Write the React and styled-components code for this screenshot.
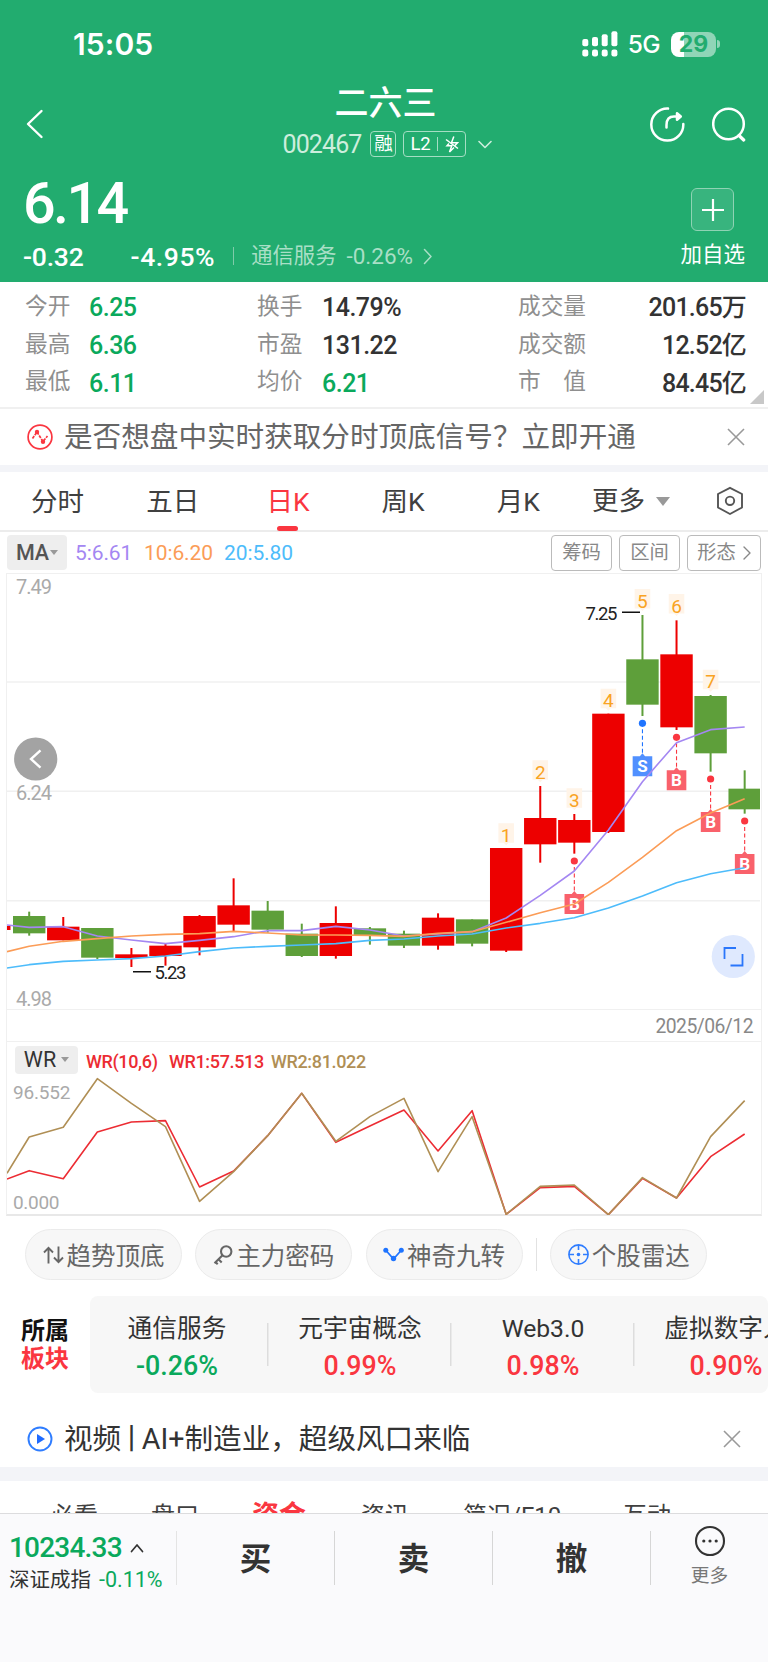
import styled, { createGlobalStyle } from "styled-components";

const GlobalStyle = createGlobalStyle`
  * {
    box-sizing: border-box;
  }

  body {
    margin: 0;
    background: #fff;
    font-family: Roboto, "Noto Sans CJK SC", sans-serif;
    color: #333;
  }

  svg {
    display: block;
    flex-shrink: 0;
  }
`;

const RED = "#fa3640";
const GREEN = "#0aa95c";
const CANDLE_RED = "#ed0000";
const CANDLE_GREEN = "#5e9f3a";

const stats = [
  ["今开", "6.25", GREEN, "换手", "14.79%", "#333", "成交量", "201.65万"],
  ["最高", "6.36", GREEN, "市盈", "131.22", "#333", "成交额", "12.52亿"],
  ["最低", "6.11", GREEN, "均价", "6.21", GREEN, "市　值", "84.45亿"],
];

const sectors = [
  { name: "通信服务", pct: "-0.26%", color: GREEN },
  { name: "元宇宙概念", pct: "0.99%", color: RED },
  { name: "Web3.0", pct: "0.98%", color: RED },
  { name: "虚拟数字人", pct: "0.90%", color: RED },
];

// color, body top, body bottom, high, low (chart units, 3 per px)
const candles = [
  ["g", 1068, 1120, 1055, 1127],
  ["r", 1100, 1141, 1071, 1141],
  ["g", 1104, 1193, 1104, 1197],
  ["r", 1183, 1194, 1164, 1221],
  ["r", 1157, 1188, 1150, 1217],
  ["r", 1068, 1162, 1065, 1186],
  ["r", 1036, 1094, 955, 1114],
  ["g", 1052, 1109, 1023, 1118],
  ["g", 1121, 1188, 1091, 1191],
  ["r", 1089, 1188, 1039, 1196],
  ["g", 1105, 1126, 1101, 1154],
  ["g", 1121, 1157, 1112, 1164],
  ["r", 1073, 1157, 1060, 1169],
  ["g", 1078, 1151, 1078, 1159],
  ["r", 864, 1172, 864, 1176],
  ["r", 774, 853, 678, 908],
  ["r", 780, 848, 762, 881],
  ["r", 461, 816, 461, 819],
  ["g", 298, 434, 165, 468],
  ["r", 283, 502, 181, 510],
  ["g", 408, 580, 405, 635],
  ["g", 686, 748, 631, 761],
];

// the first value of each line is where it enters the frame
const ma5 = [1095, 1102, 1100, 1128, 1140, 1151, 1141, 1130, 1112, 1112, 1099, 1110, 1128, 1122, 1115, 1074, 1006, 933, 810, 665, 548, 509, 501];
const ma10 = [1175, 1159, 1144, 1136, 1128, 1123, 1121, 1114, 1119, 1125, 1125, 1126, 1129, 1120, 1115, 1087, 1058, 1032, 967, 892, 812, 759, 716];
const ma20 = [1224, 1214, 1204, 1200, 1196, 1188, 1175, 1164, 1159, 1155, 1151, 1141, 1137, 1128, 1122, 1104, 1090, 1073, 1044, 1008, 968, 941, 923];
const wr1 = [537, 512, 536, 396, 366, 362, 561, 513, 407, 280, 427, 378, 330, 453, 332, 643, 563, 559, 644, 535, 594, 470, 402];
const wr2 = [520, 411, 382, 236, 310, 380, 604, 515, 407, 280, 424, 350, 295, 515, 350, 643, 559, 555, 644, 533, 594, 410, 302];

const counts = [
  { i: 14, y: 790, n: 1 },
  { i: 15, y: 601, n: 2 },
  { i: 16, y: 685, n: 3 },
  { i: 17, y: 386, n: 4 },
  { i: 18, y: 87, n: 5 },
  { i: 19, y: 102, n: 6 },
  { i: 20, y: 329, n: 7 },
];

const signals = [
  { i: 16, y: 903, type: "B" },
  { i: 18, y: 490, type: "S" },
  { i: 19, y: 532, type: "B" },
  { i: 20, y: 657, type: "B" },
  { i: 21, y: 783, type: "B" },
];

const Page = styled.div`
  width: 768px;
  height: 1662px;
  overflow: hidden;
  background: #fff;
`;

const Header = styled.header`
  height: 282px;
  background: #22ac6f;
  color: #fff;
`;

const StatusBar = styled.div`
  display: flex;
  align-items: center;
  height: 85px;
  padding: 3px 48px 0 73px;
  font-family: Inter, sans-serif;
`;

const Clock = styled.span`
  flex: 1;
  font-size: 30px;
  font-weight: 600;
  letter-spacing: 0.1px;
`;

const Network = styled.span`
  margin: 0 11px 0 9px;
  font-size: 24.5px;
  font-weight: 500;
  letter-spacing: -0.6px;
`;

const Battery = styled.div`
  width: 45px;
  height: 25px;
  border-radius: 8px;
  background: linear-gradient(to right, #fff 13px, #90d5b7 13px);
  color: #22ac6f;
  font-size: 23px;
  font-weight: 700;
  line-height: 25px;
  text-align: center;
`;

const BatteryTip = styled.div`
  width: 3px;
  height: 8px;
  margin-left: 1px;
  border-radius: 0 4px 4px 0;
  background: #90d5b7;
`;

const NavBar = styled.div`
  display: grid;
  grid-template-columns: 120px 1fr 120px;
  height: 78px;
  padding: 0 22px 0 25px;
  align-items: center;
`;

const NavTitle = styled.div`
  display: flex;
  flex-direction: column;
  align-items: center;
  height: 78px;
`;

const StockName = styled.h1`
  margin: 0;
  font-size: 34px;
  font-weight: 500;
  line-height: 36px;
`;

const CodeRow = styled.div`
  display: flex;
  align-items: center;
  height: 30px;
  margin: 8px 0 0 4px;
  color: #cdeedd;
`;

const Code = styled.span`
  margin-right: 9px;
  padding-top: 1px;
  font-size: 25px;
  letter-spacing: -0.9px;
`;

const Badge = styled.span`
  display: flex;
  align-items: center;
  justify-content: center;
  gap: 7px;
  width: ${(p) => p.$width}px;
  height: 26px;
  margin-right: ${(p) => p.$gap}px;
  border: 1.5px solid #a5dec4;
  border-radius: 4px;
  font-size: 18.5px;
  line-height: 22px;
  letter-spacing: -0.3px;
  color: #fff;
`;

const BadgeLine = styled.i`
  width: 1px;
  height: 14px;
  background: #a5dec4;
`;

const NavActions = styled.div`
  display: flex;
  justify-content: flex-end;
  gap: 27px;
`;

const PriceArea = styled.div`
  display: flex;
  justify-content: space-between;
  padding: 9px 23px 0;
`;

const Price = styled.div`
  font-size: 57.5px;
  font-weight: 500;
  line-height: 63px;
  letter-spacing: -2.6px;
`;

const ChangeRow = styled.div`
  display: flex;
  align-items: center;
  height: 30px;
  margin-top: 6px;
  font-size: 26.5px;
  font-weight: 500;
  letter-spacing: -0.2px;
`;

const ChangePct = styled.span`
  margin: 0 18px 0 47px;
  letter-spacing: 0.6px;
`;

const Industry = styled.span`
  display: flex;
  align-items: center;
  gap: 10px;
  padding-left: 18px;
  background: linear-gradient(#7fcba9, #7fcba9) left / 1px 18px no-repeat;
  color: #a9dfc6;
  font-size: 21.3px;
  font-weight: 400;
  line-height: 28px;
  letter-spacing: 0;
`;

const IndustryPct = styled.span`
  font-size: 22.5px;
`;

const AddBox = styled.div`
  display: flex;
  flex-direction: column;
  align-items: center;
  padding-top: 16px;
  font-size: 21.5px;
  line-height: 26px;
`;

const AddButton = styled.div`
  display: grid;
  place-items: center;
  width: 43px;
  height: 43px;
  margin-bottom: 11px;
  border: 1.5px solid #8fd3b4;
  border-radius: 6px;
  background: #38b47e;
`;

const Stats = styled.section`
  position: relative;
  height: 127px;
  padding: 6px 22px 0 25px;
  border-bottom: 2px solid #f0f0f0;
`;

const StatRow = styled.div`
  display: grid;
  grid-template-columns: 64px 168px 65px 196px 100px 1fr;
  height: 37.8px;
  align-items: center;
  line-height: 34px;
`;

const StatLabel = styled.span`
  color: #8f8f8f;
  font-size: 22.7px;
  white-space: nowrap;
`;

const StatValue = styled.span`
  padding-top: 3px;
  color: ${(p) => p.$color || "#333"};
  font-size: 25px;
  font-weight: 500;
  letter-spacing: ${(p) => (p.$right ? -0.8 : -0.5)}px;
  text-align: ${(p) => (p.$right ? "right" : "left")};
  white-space: nowrap;
`;

const Corner = styled.i`
  position: absolute;
  right: 4px;
  bottom: 3px;
  border-left: 14px solid transparent;
  border-bottom: 14px solid #c8c8c8;
`;

const Notice = styled.div`
  display: flex;
  align-items: center;
  gap: 11px;
  height: ${(p) => p.$height}px;
  padding: ${(p) => p.$top || 0}px ${(p) => p.$right}px 0 27px;
  font-size: 28.6px;
  color: ${(p) => p.$color};
  white-space: nowrap;
`;

const NoticeText = styled.span`
  flex: 1;
  line-height: 36px;
`;

const Bar = styled.span`
  margin: 0 -4px;
`;

const Divider = styled.div`
  height: ${(p) => p.$height}px;
  background: #f3f4f8;
`;

const Periods = styled.nav`
  display: flex;
  align-items: center;
  height: 60px;
  border-bottom: 2px solid #ececec;
`;

const Period = styled.div`
  position: relative;
  width: 115.2px;
  height: 58px;
  color: ${(p) => (p.$active ? RED : "#404040")};
  font-size: 26.5px;
  line-height: 60px;
  text-align: center;

  &::after {
    content: "";
    display: ${(p) => (p.$active ? "block" : "none")};
    position: absolute;
    left: 47px;
    bottom: -1px;
    width: 21px;
    height: 5px;
    border-radius: 3px;
    background: ${RED};
  }
`;

const MorePeriod = styled.div`
  display: flex;
  align-items: center;
  gap: 11px;
  width: 124px;
  margin-left: 16px;
  font-size: 26.5px;
  line-height: 58px;
  color: #404040;
`;

const Caret = styled.i`
  border: ${(p) => p.$size}px solid transparent;
  border-top: ${(p) => p.$size * 1.3}px solid #999;
  border-bottom: 0;
`;

const MaRow = styled.div`
  display: flex;
  align-items: center;
  height: 41px;
  padding: 0 7px;
`;

const IndicatorButton = styled.div`
  display: flex;
  align-items: center;
  justify-content: center;
  gap: ${(p) => p.$gap}px;
  width: ${(p) => p.$width}px;
  height: ${(p) => p.$height}px;
  margin-right: 8px;
  border-radius: 4px;
  background: #eee;
  color: ${(p) => p.$color};
  font-size: 21.5px;
  font-weight: ${(p) => p.$weight};
`;

const MaValue = styled.span`
  width: ${(p) => p.$width}px;
  color: ${(p) => p.$color};
  font-size: 21px;
  letter-spacing: -0.1px;
  white-space: nowrap;
`;

const Tools = styled.div`
  display: flex;
  gap: 7px;
  margin-left: auto;
`;

const Tool = styled.div`
  display: flex;
  align-items: center;
  justify-content: center;
  gap: 7px;
  width: ${(p) => p.$width}px;
  height: 36px;
  border: 1.5px solid #bbb;
  border-radius: 4px;
  color: #888;
  font-size: 19.3px;
  line-height: 30px;
`;

const ChartFrame = styled.section`
  height: 643px;
  margin: 0 6px;
  border: 1.5px solid #f0f0f0;
  border-bottom-width: 2px;
  border-bottom-color: #e8e8e8;
`;

const DateRow = styled.div`
  height: 33px;
  padding-right: 8px;
  border: 1.5px solid #f0f0f0;
  border-width: 1.5px 0;
  color: #888;
  font-size: 19.3px;
  line-height: 34px;
  letter-spacing: -0.5px;
  text-align: right;
`;

const WrHeader = styled.div`
  display: flex;
  align-items: center;
  height: 35px;
  padding-left: 8px;
`;

const WrValue = styled.span`
  width: ${(p) => p.$width}px;
  padding-top: 3px;
  color: ${(p) => p.$color};
  font-size: 18px;
  font-weight: 500;
  letter-spacing: -0.35px;
  white-space: nowrap;
`;

const Pills = styled.div`
  display: flex;
  align-items: center;
  gap: 13.3px;
  height: 80px;
  padding: 0 0 3px 25px;
`;

const Pill = styled.div`
  display: flex;
  align-items: center;
  justify-content: center;
  gap: 3px;
  width: 157px;
  height: 51px;
  border: 1.5px solid #ebebeb;
  border-radius: 26px;
  background: #f7f7f7;
  color: #666;
  font-size: 24.5px;
  white-space: nowrap;
`;

const PillLine = styled.i`
  width: 1px;
  height: 33px;
  background: #e2e2e2;
`;

const SectorRow = styled.div`
  display: flex;
  height: 97px;
`;

const SectorTitle = styled.div`
  width: 90px;
  padding: 21px 0 0 21px;
  color: #111;
  font-size: 24px;
  font-weight: 700;
  line-height: 28px;

  span {
    display: block;
    color: ${RED};
  }
`;

const SectorPanel = styled.div`
  display: flex;
  flex: 1;
  overflow: hidden;
  border-radius: 8px;
  background: #f7f7f7;
`;

const Sector = styled.div`
  flex: none;
  width: 183px;
  margin-left: ${(p) => (p.$first ? "-4.5px" : 0)};
  padding-top: 15px;
  background: linear-gradient(#ddd, #ddd) right / 1.5px 43px no-repeat;
  font-size: 24.7px;
  line-height: 36px;
  text-align: center;
`;

const SectorPct = styled.div`
  color: ${(p) => p.$color};
  font-size: 26.8px;
  font-weight: 500;
  line-height: 38px;
`;

const DetailTabs = styled.nav`
  display: flex;
  height: 32px;
  padding: 20px 0 0 50px;
  overflow: hidden;
  font-size: 25px;
  line-height: 30px;
  white-space: nowrap;
`;

const DetailTab = styled.span`
  flex: none;
  width: ${(p) => p.$width}px;
  color: ${(p) => (p.$active ? RED : "#404040")};
  font-size: ${(p) => (p.$active ? 27 : 24)}px;
  font-weight: ${(p) => (p.$active ? 700 : 400)};
`;

const TradeBar = styled.footer`
  display: flex;
  height: 149px;
  padding-top: 17px;
  border-top: 1.5px solid #dcdcde;
  background: #fafafc;
`;

const IndexBox = styled.div`
  width: 177px;
  height: 54px;
  padding-left: 9px;
  border-right: 1px solid #e4e4e4;
  white-space: nowrap;
`;

const IndexValue = styled.div`
  display: flex;
  align-items: center;
  gap: 8px;
  color: ${GREEN};
  font-size: 28px;
  font-weight: 500;
  line-height: 34px;
  letter-spacing: -0.8px;
`;

const IndexName = styled.div`
  font-size: 20.5px;
  line-height: 30px;

  span {
    margin-left: 8px;
    color: ${GREEN};
    font-size: 21.5px;
  }
`;

const TradeButton = styled.div`
  width: 158px;
  height: 54px;
  border-right: 1.5px solid #d6d6d6;
  font-size: 31.5px;
  font-weight: 700;
  line-height: 57px;
  text-align: center;
`;

const MoreButton = styled.div`
  display: flex;
  flex: 1;
  flex-direction: column;
  align-items: center;
  gap: 4px;
  margin-top: -6px;
  color: #777;
  font-size: 18.7px;
  line-height: 30px;
`;

const frameX = (i) => 22.2 + 34.07 * i;
const priceY = (v) => (v - 42) / 3;
const wrY = (v) => (v - 231) / 3;

const toPoints = (values, y) =>
  values.map((v, i) => `${i === 0 ? 0 : frameX(i - 1)},${y(v)}`).join(" ");

const Arrow = ({ size, points, color, width = 2 }) => (
  <svg width={size[0]} height={size[1]} viewBox={`0 0 ${size[0]} ${size[1]}`}>
    <polyline points={points} fill="none" stroke={color} strokeWidth={width} strokeLinecap="round" strokeLinejoin="round" />
  </svg>
);

const Close = () => (
  <svg width="18" height="18" viewBox="0 0 18 18">
    <path d="M1 1 17 17M17 1 1 17" stroke="#999" strokeWidth="1.6" fill="none" />
  </svg>
);

const SignalBars = () => (
  <svg width="37" height="26" viewBox="0 0 37 26" fill="#fff">
    {[8, 6, 3.2, 0.3].map((top, i) => (
      <g key={i}>
        <rect x={i * 9.7 + 0.3} y={top} width="6" height={15.3 - top} rx="2" />
        <rect x={i * 9.7 + 0.3} y="18.5" width="6" height="7" rx="2.2" />
      </g>
    ))}
  </svg>
);

const Signal = ({ i, y, type }) => {
  const x = frameX(i);
  const top = priceY(y);
  const buy = type === "B";
  return (
    <g>
      <line x1={x} y1={top + 6} x2={x} y2={top + 30} stroke={buy ? "#fa3640" : "#1f74ff"} strokeWidth="1.1" strokeDasharray="4 2.5" />
      <circle cx={x} cy={top} r="3.6" fill={buy ? "#fa3640" : "#1f74ff"} />
      <path d={`M${x - 9.8} ${top + 33}h7.2l2.6-3 2.6 3h7.2v20h-19.6z`} fill={buy ? "#f9616b" : "#5090ff"} />
      <text x={x} y={top + 49} fontSize="17" fontWeight="700" fill="#fff" textAnchor="middle">
        {type}
      </text>
    </g>
  );
};

const PriceChart = () => (
  <svg width="753" height="435" viewBox="0 0 753 435">
    {[366, 694, 1022].map((v) => (
      <line key={v} x1="0" x2="753" y1={priceY(v)} y2={priceY(v)} stroke="#f0f0f0" strokeWidth="1.5" />
    ))}
    <g fontSize="20" fill="#aaa">
      <text x="9" y="19.5" textLength="36">7.49</text>
      <text x="9" y="225.5" textLength="36">6.24</text>
      <text x="9" y="431.5" textLength="36">4.98</text>
    </g>
    <rect x="0" y={priceY(1098)} width="3.5" height="4" fill={CANDLE_RED} />
    {candles.map(([color, top, bottom, high, low], i) => {
      const fill = color === "r" ? CANDLE_RED : CANDLE_GREEN;
      return (
        <g key={i} fill={fill}>
          <rect x={frameX(i) - 1} y={priceY(high)} width="2" height={(low - high) / 3} />
          <rect x={frameX(i) - 16.2} y={priceY(top)} width="32.4" height={(bottom - top) / 3} />
        </g>
      );
    })}
    {counts.map(({ i, y, n }) => (
      <g key={n}>
        <path d={`M${frameX(i) - 7.8} ${priceY(y)}h15.6v19.5h-5.3l-2.5 2.5-2.5-2.5h-5.3z`} fill="#fff4e8" />
        <text x={frameX(i)} y={priceY(y) + 18.5} fontSize="19" fill="#f9a322" textAnchor="middle">
          {n}
        </text>
      </g>
    ))}
    {signals.map((s) => (
      <Signal key={s.i} {...s} />
    ))}
    <g fill="none" strokeWidth="1.6" strokeLinejoin="round">
      <polyline points={toPoints(ma5, priceY)} stroke="#a487f2" />
      <polyline points={toPoints(ma10, priceY)} stroke="#fb9c57" />
      <polyline points={toPoints(ma20, priceY)} stroke="#4dbcfb" />
    </g>
    <g fontSize="18.5" fill="#222">
      <text x="578.5" y="45.5" textLength="32">7.25</text>
      <text x="147.5" y="405" textLength="32">5.23</text>
      <path d="M615 38.3h18M126 397.7h18" stroke="#111" strokeWidth="1.5" />
    </g>
    <circle cx="28.7" cy="185" r="21.6" fill="#a3a3a3" />
    <path d="M33.5 176.3 24 185l9.5 8.7" fill="none" stroke="#fff" strokeWidth="2.4" />
    <circle cx="726.3" cy="382.5" r="21.6" fill="#dfe9fe" />
    <path d="M717.5 385v-11h11.5M735.5 380v11.5h-12" fill="none" stroke="#2a76fb" strokeWidth="1.8" />
  </svg>
);

const WrChart = () => (
  <svg width="753" height="138" viewBox="0 0 753 138">
    <g fontSize="19" fill="#aaa">
      <text x="6" y="21.5" textLength="57.5">96.552</text>
      <text x="6" y="132" textLength="46.5">0.000</text>
    </g>
    <g fill="none" strokeWidth="1.6" strokeLinejoin="round">
      <polyline points={toPoints(wr1, wrY)} stroke="#ec2c33" />
      <polyline points={toPoints(wr2, wrY)} stroke="#b08f55" />
    </g>
  </svg>
);

const App = () => (
  <>
    <GlobalStyle />
    <Page>
      <Header>
        <StatusBar>
          <Clock>15:05</Clock>
          <SignalBars />
          <Network>5G</Network>
          <Battery>29</Battery>
          <BatteryTip />
        </StatusBar>
        <NavBar>
          <Arrow size={[19, 30]} points="16.5,2 3,15 16.5,28" color="#fff" width={2.4} />
          <NavTitle>
            <StockName>二六三</StockName>
            <CodeRow>
              <Code>002467</Code>
              <Badge $width={26} $gap={7}>融</Badge>
              <Badge $width={63} $gap={12}>
                L2
                <BadgeLine />
                <svg width="14" height="18" viewBox="0 0 14 18" fill="none" stroke="#fff" strokeWidth="1.5">
                  <path d="M1 4.5 13 13.5" />
                  <path d="M8.8 1.5 6.5 7.8h6L9.5 11M4 8.500 2 10.800h4.800L4.500 17 9 12.500" />
                </svg>
              </Badge>
              <Arrow size={[14, 9]} points="1,1.5 7,7.5 13,1.5" color="#cdeedd" width={1.6} />
            </CodeRow>
          </NavTitle>
          <NavActions>
            <svg width="35" height="35" viewBox="0 0 35 35" fill="none" stroke="#fff" strokeWidth="2.5" strokeLinecap="round" strokeLinejoin="round">
              <path d="M18 1.6A16 16 0 1 0 33.3 17" />
              <path d="M16.5 20.5V18c0-6 2.5-8.5 7.5-8.5h5.5" />
              <path d="M27 6.2 30.8 9.5 27 12.8z" fill="#fff" />
            </svg>
            <svg width="34" height="35" viewBox="0 0 34 35" fill="none" stroke="#fff" strokeWidth="2.5" strokeLinecap="round">
              <circle cx="16.5" cy="17" r="15.3" />
              <path d="M27 28.5 31.7 33" strokeWidth="3.2" />
            </svg>
          </NavActions>
        </NavBar>
        <PriceArea>
          <div>
            <Price>6.14</Price>
            <ChangeRow>
              -0.32
              <ChangePct>-4.95%</ChangePct>
              <Industry>
                通信服务
                <IndustryPct>-0.26%</IndustryPct>
                <Arrow size={[10, 17]} points="1.5,1.5 8,8.5 1.5,15.5" color="#a9dfc6" width={1.5} />
              </Industry>
            </ChangeRow>
          </div>
          <AddBox>
            <AddButton>
              <svg width="22" height="22" viewBox="0 0 22 22">
                <path d="M11 0v22M0 11h22" stroke="#fff" strokeWidth="2.2" />
              </svg>
            </AddButton>
            加自选
          </AddBox>
        </PriceArea>
      </Header>

      <Stats>
        {stats.map((s) => (
          <StatRow key={s[0]}>
            <StatLabel>{s[0]}</StatLabel>
            <StatValue $color={s[2]}>{s[1]}</StatValue>
            <StatLabel>{s[3]}</StatLabel>
            <StatValue $color={s[5]}>{s[4]}</StatValue>
            <StatLabel>{s[6]}</StatLabel>
            <StatValue $right>{s[7]}</StatValue>
          </StatRow>
        ))}
        <Corner />
      </Stats>

      <Notice $height={56} $right={23} $color="#666">
        <svg width="26" height="26" viewBox="0 0 26 26" fill="none" stroke={RED} strokeWidth="1.7">
          <circle cx="13" cy="13" r="11.9" />
          <path d="M5.5 14.5 10 8l6 9.5L20.5 12" strokeDasharray="3 1" />
          <circle cx="10" cy="8" r="2.2" fill={RED} stroke="none" />
          <circle cx="16" cy="17.7" r="2.2" fill={RED} stroke="none" />
        </svg>
        <NoticeText>是否想盘中实时获取分时顶底信号？立即开通</NoticeText>
        <Close />
      </Notice>
      <Divider $height={7} />

      <Periods>
        {["分时", "五日", "日K", "周K", "月K"].map((t) => (
          <Period key={t} $active={t === "日K"}>
            {t}
          </Period>
        ))}
        <MorePeriod>
          更多
          <Caret $size={7} />
        </MorePeriod>
        <svg width="28" height="30" viewBox="0 0 28 30" fill="none" stroke="#555" strokeWidth="1.9" strokeLinejoin="round">
          <path d="M14 1.8 26 8v13.5L14 28 2 21.5V8z" />
          <circle cx="14" cy="14.8" r="4.2" />
        </svg>
      </Periods>

      <MaRow>
        <IndicatorButton $width={60} $height={35} $gap={1} $color="#555" $weight={500}>
          MA
          <Caret $size={4} />
        </IndicatorButton>
        <MaValue $width={69} $color="#a487f2">5:6.61</MaValue>
        <MaValue $width={80} $color="#fb9c57">10:6.20</MaValue>
        <MaValue $width={80} $color="#4dbcfb">20:5.80</MaValue>
        <Tools>
          <Tool $width={61}>筹码</Tool>
          <Tool $width={61}>区间</Tool>
          <Tool $width={74}>
            形态
            <Arrow size={[8, 14]} points="1,1 7,7 1,13" color="#888" width={1.4} />
          </Tool>
        </Tools>
      </MaRow>

      <ChartFrame>
        <PriceChart />
        <DateRow>2025/06/12</DateRow>
        <WrHeader>
          <IndicatorButton $width={63} $height={28} $gap={5} $color="#333" $weight={400}>
            WR
            <Caret $size={4} />
          </IndicatorButton>
          <WrValue $width={83} $color="#ec2c33">WR(10,6)</WrValue>
          <WrValue $width={102} $color="#ec2c33">WR1:57.513</WrValue>
          <WrValue $width={102} $color="#b08f55">WR2:81.022</WrValue>
        </WrHeader>
        <WrChart />
      </ChartFrame>

      <Pills>
        <Pill>
          <svg width="21" height="18" viewBox="0 0 21 18" fill="none" stroke="#666" strokeWidth="1.9">
            <path d="M5.5 17.5V2M1 6.5 5.5 1.8 10 6.5M15.5.5V16M11 11.5l4.5 4.7 4.5-4.7" />
          </svg>
          趋势顶底
        </Pill>
        <Pill>
          <svg width="20" height="20" viewBox="0 0 20 20" fill="none" stroke="#666" strokeWidth="2.1">
            <circle cx="13.2" cy="6.5" r="5.2" />
            <path d="M9.5 10.2 1.500 18.200M5.500 14.200l3.200 3.200M2.500 17l2.200 2.200" />
          </svg>
          主力密码
        </Pill>
        <Pill>
          <svg width="21" height="15" viewBox="0 0 21 15" fill="#1f74ff">
            <path d="M3 3.5 10.5 12 18.500 3" fill="none" stroke="#1f74ff" strokeWidth="1.8" />
            <circle cx="2.8" cy="3.300" r="2.500" />
            <circle cx="10.500" cy="11.500" r="2.700" />
            <circle cx="18.300" cy="3.300" r="2.500" />
          </svg>
          神奇九转
        </Pill>
        <PillLine />
        <Pill>
          <svg width="21" height="21" viewBox="0 0 21 21" fill="none" stroke="#2f7dff" strokeWidth="1.6">
            <circle cx="10.5" cy="10.5" r="9.6" />
            <path d="M10.5 1v5M10.5 15v5M1 10.5h5M15 10.5h5" />
            <circle cx="10.5" cy="10.5" r="1.8" fill="#2f7dff" stroke="none" />
          </svg>
          个股雷达
        </Pill>
      </Pills>

      <SectorRow>
        <SectorTitle>
          所属<span>板块</span>
        </SectorTitle>
        <SectorPanel>
          {sectors.map((s, i) => (
            <Sector key={s.name} $first={i === 0}>
              {s.name}
              <SectorPct $color={s.color}>{s.pct}</SectorPct>
            </Sector>
          ))}
        </SectorPanel>
      </SectorRow>

      <Notice $height={74} $top={17} $right={27} $color="#333">
        <svg width="26" height="26" viewBox="0 0 26 26">
          <circle cx="13" cy="13" r="11.5" fill="none" stroke="#2f7dff" strokeWidth="1.9" />
          <path d="M10 8v10l8-5z" fill="#1f6bff" />
        </svg>
        <NoticeText>
          视频<Bar>丨</Bar>AI+制造业，超级风口来临
        </NoticeText>
        <Close />
      </Notice>
      <Divider $height={14} />

      <DetailTabs>
        <DetailTab $width={101}>必看</DetailTab>
        <DetailTab $width={101}>盘口</DetailTab>
        <DetailTab $width={109} $active>资金</DetailTab>
        <DetailTab $width={102}>资讯</DetailTab>
        <DetailTab $width={160}>简况/F10</DetailTab>
        <DetailTab $width={100}>互动</DetailTab>
      </DetailTabs>

      <TradeBar>
        <IndexBox>
          <IndexValue>
            10234.33
            <Arrow size={[14, 10]} points="1.5,8.5 7,2 12.5,8.5" color="#333" width={1.7} />
          </IndexValue>
          <IndexName>
            深证成指<span>-0.11%</span>
          </IndexName>
        </IndexBox>
        <TradeButton>买</TradeButton>
        <TradeButton>卖</TradeButton>
        <TradeButton>撤</TradeButton>
        <MoreButton>
          <svg width="32" height="32" viewBox="0 0 32 32">
            <circle cx="16" cy="16" r="14" fill="none" stroke="#333" strokeWidth="2.1" />
            <g fill="#333">
              <circle cx="9.8" cy="16" r="1.6" />
              <circle cx="16" cy="16" r="1.6" />
              <circle cx="22.2" cy="16" r="1.6" />
            </g>
          </svg>
          更多
        </MoreButton>
      </TradeBar>
    </Page>
  </>
);

export default App;
